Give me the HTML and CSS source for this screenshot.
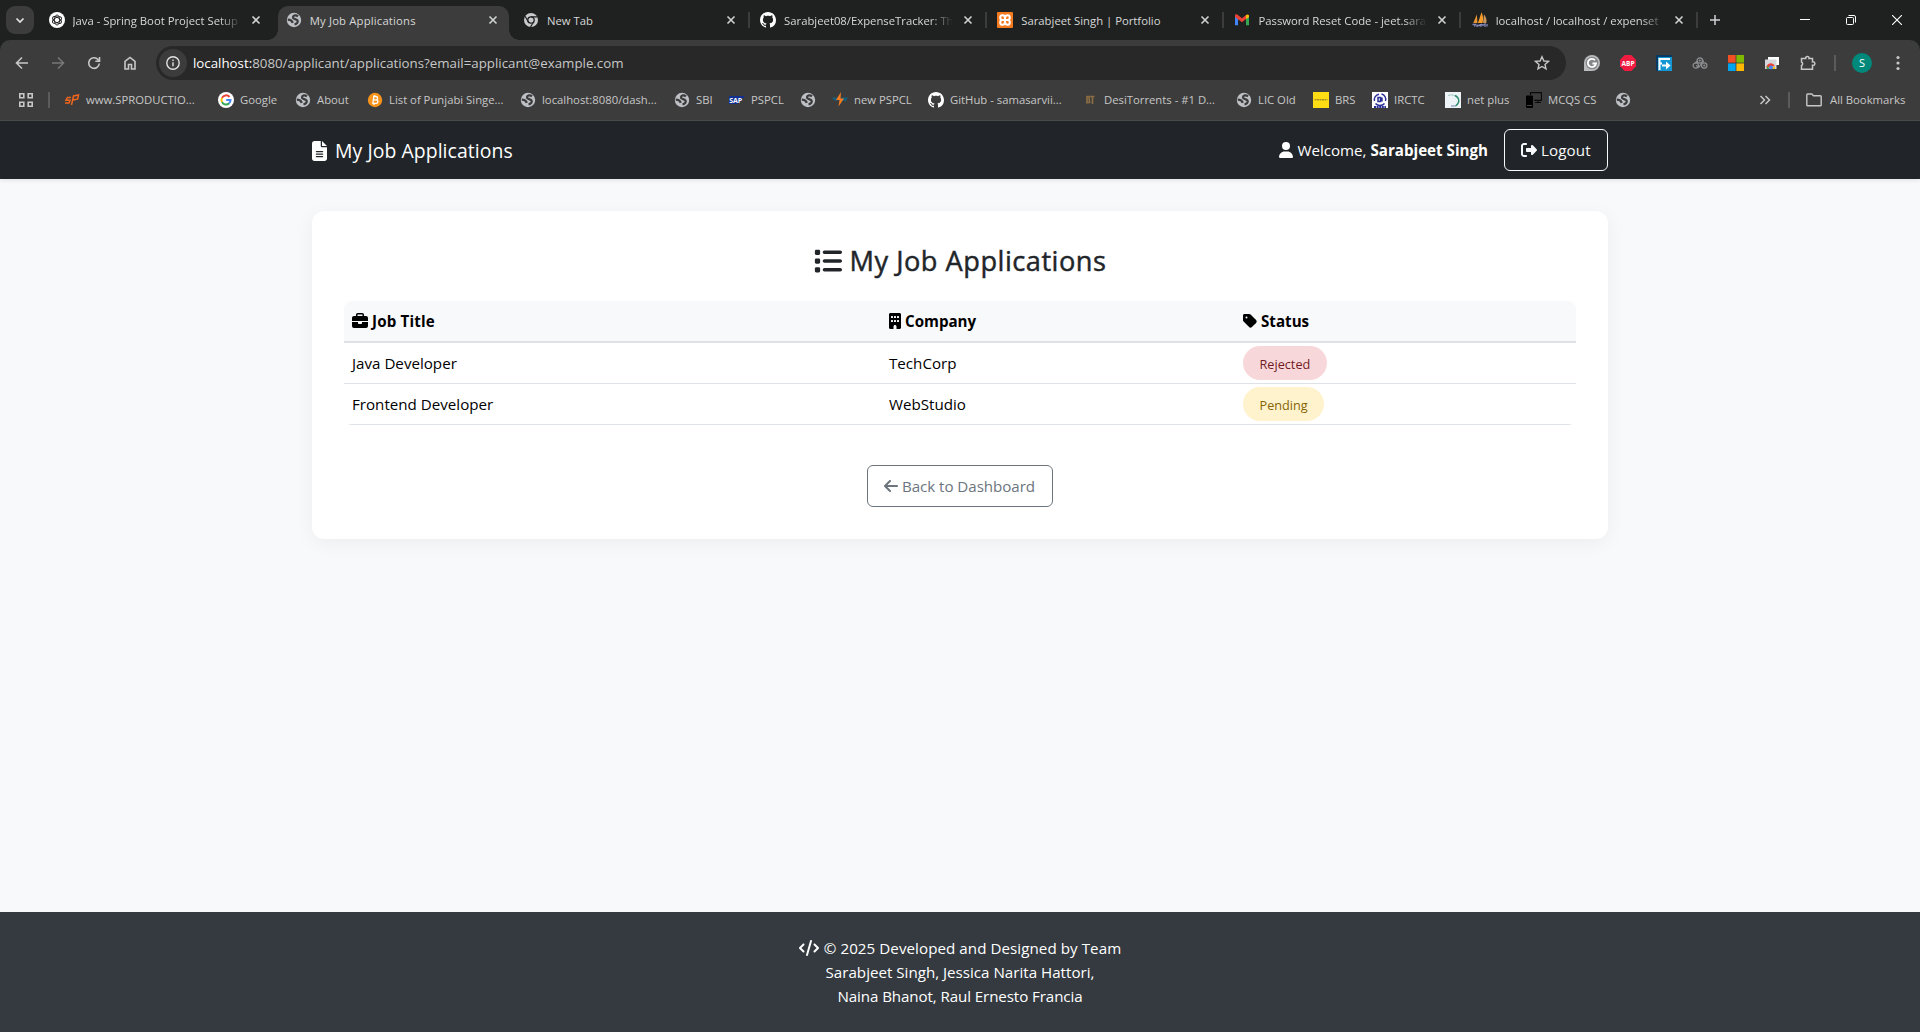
FILE: index.html
```html
<!DOCTYPE html>
<html lang="en">
<head>
<meta charset="utf-8">
<title>My Job Applications</title>
<link rel="stylesheet" href="styles.css">
</head>
<body>
<svg class="sprite" aria-hidden="true">
  <symbol id="globe" viewBox="0 0 16 16"><circle cx="8" cy="8" r="7.200" fill="#bdc1c6"/><g fill="none" stroke="#3c3c3c" stroke-width="2.200"><path d="M12 4.300C9.800 2.500 7.200 3.300 7 5.200c-.2 2.300 3 1.500 4.500 3.200 1 1.500-.5 3.300-3 4.100"/><path d="M1.800 7.600c2.200 0 4.200.8 5 3.200"/></g></symbol>
  <symbol id="github" viewBox="0 0 16 16"><path fill="#fff" d="M8 0C3.580 0 0 3.580 0 8c0 3.540 2.290 6.530 5.470 7.590.4.070.55-.17.55-.38 0-.19-.01-.82-.01-1.490-2.010.37-2.530-.49-2.690-.94-.09-.23-.48-.94-.82-1.130-.28-.15-.68-.52-.01-.53.63-.01 1.080.58 1.230.82.72 1.210 1.870.87 2.330.66.070-.52.28-.87.51-1.070-1.780-.2-3.640-.89-3.640-3.950 0-.87.31-1.590.82-2.150-.08-.2-.36-1.020.080-2.120 0 0 .67-.21 2.200.82.64-.18 1.320-.27 2-.27.68 0 1.360.090 2 .27 1.530-1.040 2.200-.82 2.200-.82.44 1.100.16 1.920.080 2.120.51.56.82 1.270.82 2.150 0 3.070-1.870 3.750-3.650 3.950.29.25.54.73.54 1.480 0 1.070-.01 1.930-.01 2.200 0 .21.15.46.55.38A8.013 8.013 0 0016 8c0-4.420-3.580-8-8-8z"/></symbol>
  <symbol id="close" viewBox="0 0 10 10"><path d="M1.500 1.500l7 7m0-7l-7 7" stroke="#d0d2d2" stroke-width="1.600" fill="none"/></symbol>
</svg>

<header class="browser">
  <div class="tabstrip">
    <button class="tab-search"><svg width="10" height="10" viewBox="0 0 10 10"><path d="M1.500 3.500L5 7l3.500-3.500" fill="none" stroke="#e3e3e3" stroke-width="1.700"/></svg></button>
    <div class="tab no-line"><svg class="fav" viewBox="0 0 16 16"><circle cx="8" cy="8" r="8" fill="#fff"/><g fill="none" stroke="#222" stroke-width=".9"><ellipse cx="8" cy="8" rx="2.500" ry="5"/><ellipse cx="8" cy="8" rx="2.500" ry="5" transform="rotate(60 8 8)"/><ellipse cx="8" cy="8" rx="2.500" ry="5" transform="rotate(120 8 8)"/></g></svg><span class="label fade">Java - Spring Boot Project Setup</span><svg class="x"><use href="#close"/></svg></div>
    <div class="tab active"><svg class="fav"><use href="#globe"/></svg><span class="label t-a">My Job Applications</span><svg class="x"><use href="#close"/></svg></div>
    <div class="tab"><svg class="fav" viewBox="0 0 16 16"><circle cx="8" cy="8" r="7" fill="#c8cacc"/><circle cx="8" cy="8" r="3.200" fill="none" stroke="#1f2120" stroke-width="1.300"/><path d="M8 4.800h6.300M5.300 9.700L2.100 4.200M10.700 9.700L7.500 15" stroke="#1f2120" stroke-width="1.200"/></svg><span class="label">New Tab</span><svg class="x"><use href="#close"/></svg></div>
    <div class="tab"><svg class="fav"><use href="#github"/></svg><span class="label fade">Sarabjeet08/ExpenseTracker: Th</span><svg class="x"><use href="#close"/></svg></div>
    <div class="tab"><svg class="fav" viewBox="0 0 16 16"><rect width="16" height="16" rx="1" fill="#f47a20"/><path d="M8 6.200C8 4 6.800 3.200 5.500 3.200S3.200 4 3.200 5.600 4 8 5.500 8h5c1.500 0 2.300-.8 2.300-2.400s-1-2.400-2.300-2.400S8 4 8 6.200v3.600c0 2.200-1.200 3-2.500 3S3.200 12 3.200 10.400 4 8 5.500 8h5c1.500 0 2.300.8 2.300 2.400s-1 2.400-2.300 2.400S8 12 8 9.800" fill="none" stroke="#fff" stroke-width="2"/></svg><span class="label">Sarabjeet Singh | Portfolio</span><svg class="x"><use href="#close"/></svg></div>
    <div class="tab"><svg class="fav" viewBox="0 0 16 16"><path d="M1 4v9.300h3V7z" fill="#4285f4"/><path d="M15 4v9.300h-3V7z" fill="#34a853"/><path d="M1 3.500C1 2.300 2.500 2 3.500 2.700L8 6.200l4-3.100v4L8 10.300 1 5z" fill="#ea4335"/><path d="M12 3.100c1.500-1.100 3-.6 3 .9v1l-3 2.300z" fill="#fbbc04"/></svg><span class="label fade">Password Reset Code - jeet.sara</span><svg class="x"><use href="#close"/></svg></div>
    <div class="tab"><svg class="fav" viewBox="0 0 16 16"><path d="M4.800 2.500L5.500 11H1.300z" fill="#e9962f"/><path d="M9.500.3c1.600 3 2 7 1 10.700H6z" fill="#f79c2a"/><path d="M12 2.500c2.200 2.500 3 5.500 2.300 8.500H11z" fill="#c8955a"/><path d="M.5 12.500h3l-1 2m2.500-2v2.500m0-1.500h3v-1.500m1 0v2.700m0-2.500l2 1 2-1.200v3m2-3v2.500" fill="none" stroke="#8288b8" stroke-width="1.300"/></svg><span class="label fade">localhost / localhost / expenset</span><svg class="x"><use href="#close"/></svg></div>
    <button class="new-tab"><svg width="12" height="12" viewBox="0 0 12 12"><path d="M6 1v10M1 6h10" stroke="#d0d2d2" stroke-width="1.500"/></svg></button>
    <div class="window-controls">
      <svg width="10" height="10" viewBox="0 0 10 10"><path d="M0 4.500h10" stroke="#fff"/></svg>
      <svg width="10" height="10" viewBox="0 0 10 10" fill="none" stroke="#fff"><rect x=".5" y="2.500" width="7" height="7" rx="1"/><path d="M2.500.5H8Q9.500.5 9.500 2v5.500"/></svg>
      <svg width="10" height="10" viewBox="0 0 10 10"><path d="M0 0l10 10M10 0L0 10" stroke="#fff" stroke-width="1.100"/></svg>
    </div>
  </div>

  <div class="toolbar">
    <div class="nav">
      <svg viewBox="0 0 16 16"><path d="M14 8H3M8 2.500L2.500 8 8 13.500"/></svg>
      <svg class="dim" viewBox="0 0 16 16"><path d="M2 8h11M8 2.500L13.500 8 8 13.500"/></svg>
      <svg viewBox="0 0 16 16"><path d="M13.300 8.500A5.300 5.300 0 1 1 12 4.500l1.400 1.500M13.500 2v4.200H9.300"/></svg>
      <svg viewBox="0 0 16 16"><path d="M3 6.500V14h3.500V9.500h3V14H13V6.500l-5-4z"/></svg>
    </div>
    <div class="omnibox">
      <span class="site-info"><svg width="16" height="16" viewBox="0 0 16 16" fill="none" stroke="#e3e3e3" stroke-width="1.400"><circle cx="8" cy="8" r="6.200"/><path d="M8 7.200v4M8 4.500v1.500"/></svg></span>
      <span class="url"><b>localhost:</b>8080/applicant/applications?email=applicant@example.com</span>
      <svg class="star" width="16" height="16" viewBox="0 0 16 16"><path d="M8 1.800l1.900 4.200 4.500.4-3.400 3 1 4.400L8 11.500l-4 2.300 1-4.400-3.400-3L6.100 6z" fill="none" stroke="#c7c7c7" stroke-width="1.400"/></svg>
    </div>
    <div class="extensions">
      <svg viewBox="0 0 16 16"><path d="M8 0a8 8 0 1 1 0 16H0V8a8 8 0 0 1 8-8z" fill="#b9bbbd"/><circle cx="8" cy="8" r="6.300" fill="#85888a"/><path d="M11 5.200A4.100 4.100 0 1 0 12 8.500H8.500" fill="none" stroke="#fff" stroke-width="1.800"/></svg>
      <svg viewBox="0 0 16 16"><path d="M4.700 0h6.600L16 4.700v6.600L11.300 16H4.700L0 11.300V4.700z" fill="#f01b41"/><text x="8" y="10.500" text-anchor="middle" class="abp">ABP</text></svg>
      <svg viewBox="0 0 16 16"><rect width="16" height="16" rx="1" fill="#063a63"/><rect x="2" y="2" width="14" height="14" fill="#1597d4"/><path d="M3.500 15V4H14M3.500 8.500H6" fill="none" stroke="#fff" stroke-width="2"/><path d="M6 9.500h4V6.500l4.500 4-4.500 4v-3H6z" fill="#fff"/></svg>
      <svg viewBox="0 0 16 16" fill="none" stroke="#8f9193" stroke-width="1.200"><circle cx="7.800" cy="5.500" r="2.700"/><circle cx="3.800" cy="10.500" r="2.700"/><circle cx="12.200" cy="10.500" r="2.700"/><circle cx="7.800" cy="5.500" r=".5"/><path d="M4 10.500l3 1.500 3-4M10.500 4.500l1.200 3M5.300 6L3.300 8"/><circle cx="12.300" cy="10.500" r=".5"/></svg>
      <svg viewBox="0 0 16 16"><path d="M0 0h7.600v7.600H0z" fill="#f25022"/><path d="M8.400 0H16v7.600H8.400z" fill="#7fba00"/><path d="M0 8.400h7.600V16H0z" fill="#00a4ef"/><path d="M8.400 8.400H16V16H8.400z" fill="#ffb900"/></svg>
      <svg viewBox="0 0 16 16"><path d="M4 2h11v8H4z" fill="#fff"/><path d="M1 4.500h11.500V14H1z" fill="#d5d7da"/><path d="M2.600 13.800a4.200 4.200 0 0 1 8.200-2.500H7z" fill="#ea4335"/><path d="M2.800 10.500L5.500 14H3z" fill="#34a853"/><path d="M10.800 11.300q.6 1.200.2 2.700H7z" fill="#fbbc04"/><circle cx="7" cy="12.500" r="1.900" fill="#4285f4"/></svg>
      <svg viewBox="0 0 16 16"><path d="M1.500 3.500h4.200a1.700 1.700 0 1 1 3.300 0h3.500v3.400a1.800 1.800 0 1 1 0 3.400v4H1.500v-3.800a1.900 1.900 0 0 0 0-3.500z" fill="none" stroke="#c7c7c7" stroke-width="1.500"/></svg>
    </div>
    <i class="divider"></i>
    <span class="avatar">S</span>
    <svg class="menu" width="4" height="16" viewBox="0 0 4 16" fill="#c7c7c7"><circle cx="2" cy="2.500" r="1.600"/><circle cx="2" cy="8" r="1.600"/><circle cx="2" cy="13.500" r="1.600"/></svg>
  </div>

  <div class="bookmarks">
    <svg class="apps" width="14" height="14" viewBox="0 0 14 14" fill="none" stroke="#c7c7c7" stroke-width="1.600"><path d="M.8.8h4v4h-4zM9.200.8h4v4h-4zM.8 9.200h4v4h-4zM9.200 9.200h4v4h-4z"/></svg>
    <i class="divider"></i>
    <a><svg viewBox="0 0 16 16" fill="none" stroke="#f0661c" stroke-width="1.500"><path d="M7 5.500H3.500L2 8.200h4L5 11H1M7.500 13L9.500 4l5-1-.8 4-5 1.200"/></svg><span>www.SPRODUCTIO...</span></a>
    <a><svg viewBox="0 0 16 16"><circle cx="8" cy="8" r="8" fill="#fff"/><g fill="none" stroke-width="2"><path d="M11.500 5A4.500 4.500 0 0 0 4 5.900" stroke="#ea4335"/><path d="M4 5.900a4.600 4.600 0 0 0 0 4.200" stroke="#fbbc05"/><path d="M4 10.100a4.500 4.500 0 0 0 7.100 1.200" stroke="#34a853"/><path d="M11.100 11.300A4.300 4.300 0 0 0 12.500 8H8.200" stroke="#4285f4"/></g></svg><span>Google</span></a>
    <a><svg><use href="#globe"/></svg><span>About</span></a>
    <a><svg viewBox="0 0 16 16"><circle cx="8" cy="8" r="7.200" fill="#f7931a"/><path d="M6.300 4.500h2.600a1.600 1.600 0 0 1 0 3.300H6.200h3a1.800 1.800 0 0 1-.3 3.600H5.400M6.800 4.500l-1 7M7.500 3v1.500M7 11.500V13" fill="none" stroke="#fff" stroke-width="1.300"/></svg><span>List of Punjabi Singe...</span></a>
    <a><svg><use href="#globe"/></svg><span>localhost:8080/dash...</span></a>
    <a><svg><use href="#globe"/></svg><span>SBI</span></a>
    <a><svg viewBox="0 0 16 16"><path d="M0 4h16l-7.500 8H0z" fill="#12308f"/><text x="6.700" y="10.500" text-anchor="middle" class="sap">SAP</text></svg><span>PSPCL</span></a>
    <a><svg><use href="#globe"/></svg></a>
    <a><svg viewBox="0 0 16 16"><path d="M0 5.500h6l-1 3H2zM9 5.500h7L14 9H9z" fill="#14607c"/><path d="M9 0L4 8h3.500L6.500 14.500 12 6.500H8.500z" fill="#f47a20"/></svg><span>new PSPCL</span></a>
    <a><svg><use href="#github"/></svg><span>GitHub - samasarvii...</span></a>
    <a><svg viewBox="0 0 16 16" fill="none" stroke="#8a6d42" stroke-width="1.700"><path d="M5 4v7.500M4.500 4.500H7l.5 6H5M8 4.500h4.500M10.500 4v8"/></svg><span>DesiTorrents - #1 D...</span></a>
    <a><svg><use href="#globe"/></svg><span>LIC Old</span></a>
    <a><svg viewBox="0 0 16 16"><path d="M0 0h16v16H0z" fill="#ffdd15"/><path d="M1.500 7.800h13" stroke="#7d7020" stroke-dasharray="2 .5"/></svg><span>BRS</span></a>
    <a><svg viewBox="0 0 16 16"><path d="M0 0h16v16H0z" fill="#fff"/><g fill="none" stroke="#2a2f95"><path d="M2.500 9A5.500 5.500 0 0 1 7 2.200M9.500 2A5.500 5.500 0 0 1 13.500 9M3.500 11.500a6 6 0 0 0 9 0" stroke-width="1.400"/><path d="M6 5.500h2.500v4H6zM10 5.500v4" stroke-width="1.500"/><path d="M2 15h12" stroke-width="2" stroke-dasharray="2 .6"/></g></svg><span>IRCTC</span></a>
    <a><svg viewBox="0 0 16 16"><path d="M0 0h16v16H0z" fill="#edf3f6"/><path d="M3 3.500a7 6 0 0 1 9 2" fill="none" stroke="#9fc7c2"/><path d="M10 3.500c5 2.500 5 7.500.5 10.500" fill="none" stroke="#2f8f6d" stroke-width="1.400"/><path d="M10.500 14H6" stroke="#7480b5"/></svg><span>net plus</span></a>
    <a><svg viewBox="0 0 16 16"><path d="M4.500 3V.7h11v7.600H8M12 8v2.500M9 10.500h6" fill="none" stroke="#0a0a0a" stroke-width="1.200"/><rect y="3.500" width="7" height="12.500" rx="1" fill="#000"/><path d="M1 13.500h5" stroke="#444"/></svg><span>MCQS CS</span></a>
    <a><svg><use href="#globe"/></svg></a>
    <svg class="more" width="12" height="12" viewBox="0 0 12 12"><path d="M1.500 2L5.500 6l-4 4M6.500 2l4 4-4 4" fill="none" stroke="#c7c7c7" stroke-width="1.500"/></svg>
    <i class="divider"></i>
    <a><svg class="folder" viewBox="0 0 16 14"><path d="M.8 1.800Q.8 1 1.600 1h4.200l1.700 1.800h6.900q.8 0 .8.800v8.400q0 .8-.8.8H1.600q-.8 0-.8-.8z" fill="none" stroke="#c7c7c7" stroke-width="1.400"/></svg><span>All Bookmarks</span></a>
  </div>
</header>

<nav class="navbar">
  <div class="container">
    <span class="brand"><svg width="15" height="20" viewBox="0 0 384 512"><path d="M64 0C28.700 0 0 28.700 0 64V448c0 35.300 28.700 64 64 64H320c35.300 0 64-28.700 64-64V160H256c-17.700 0-32-14.300-32-32V0H64zM256 0V128H384L256 0zM112 256H272c8.800 0 16 7.200 16 16s-7.200 16-16 16H112c-8.800 0-16-7.200-16-16s7.200-16 16-16zm0 64H272c8.800 0 16 7.200 16 16s-7.200 16-16 16H112c-8.800 0-16-7.200-16-16s7.200-16 16-16zm0 64H272c8.800 0 16 7.200 16 16s-7.200 16-16 16H112c-8.800 0-16-7.200-16-16s7.200-16 16-16z"/></svg>My Job Applications</span>
    <div class="account">
      <span class="welcome"><svg width="14" height="16" viewBox="0 0 448 512"><path d="M224 256A128 128 0 1 0 224 0a128 128 0 1 0 0 256zm-45.700 48C79.800 304 0 383.800 0 482.300C0 498.700 13.300 512 29.700 512H418.300c16.400 0 29.700-13.300 29.700-29.700C448 383.800 368.200 304 269.700 304H178.300z"/></svg>Welcome,&nbsp;<strong>Sarabjeet Singh</strong></span>
      <a class="btn btn-light"><svg width="16" height="16" viewBox="0 0 512 512"><path d="M377.900 105.900L500.700 228.700c7.200 7.200 11.300 17.100 11.300 27.300s-4.100 20.100-11.300 27.300L377.900 406.100c-6.400 6.400-15 9.900-24 9.900c-18.700 0-33.900-15.200-33.900-33.900l0-62.100-128 0c-17.700 0-32-14.300-32-32l0-64c0-17.700 14.300-32 32-32l128 0 0-62.100c0-18.700 15.200-33.900 33.900-33.900c9 0 17.600 3.600 24 9.900zM160 96L96 96c-17.700 0-32 14.300-32 32l0 256c0 17.700 14.300 32 32 32l64 0c17.700 0 32 14.300 32 32s-14.300 32-32 32l-64 0c-53 0-96-43-96-96L0 128C0 75 43 32 96 32l64 0c17.700 0 32 14.300 32 32s-14.300 32-32 32z"/></svg>Logout</a>
    </div>
  </div>
</nav>

<main>
  <section class="card">
    <h3><svg width="28" height="28" viewBox="0 0 512 512"><path d="M40 48C26.700 48 16 58.700 16 72v48c0 13.300 10.700 24 24 24H88c13.300 0 24-10.700 24-24V72c0-13.300-10.700-24-24-24zM192 64c-17.700 0-32 14.300-32 32s14.300 32 32 32H480c17.700 0 32-14.300 32-32s-14.300-32-32-32zm0 160c-17.700 0-32 14.300-32 32s14.300 32 32 32H480c17.700 0 32-14.300 32-32s-14.300-32-32-32zm0 160c-17.700 0-32 14.300-32 32s14.300 32 32 32H480c17.700 0 32-14.300 32-32s-14.300-32-32-32zM16 232v48c0 13.300 10.700 24 24 24H88c13.300 0 24-10.700 24-24V232c0-13.300-10.700-24-24-24H40c-13.300 0-24 10.700-24 24zM40 368c-13.300 0-24 10.700-24 24v48c0 13.300 10.700 24 24 24H88c13.300 0 24-10.700 24-24V392c0-13.300-10.700-24-24-24z"/></svg><span>My Job Applications</span></h3>
    <div class="table-wrap">
      <table>
        <colgroup><col class="c-title"><col class="c-company"><col></colgroup>
        <thead>
          <tr>
            <th class="th-title"><span><svg width="16" height="16" viewBox="0 0 512 512"><path d="M184 48H328c4.400 0 8 3.600 8 8V96H176V56c0-4.400 3.600-8 8-8zm-56 8V96H64C28.700 96 0 124.700 0 160v96H192 320 512V160c0-35.300-28.700-64-64-64H384V56c0-30.900-25.100-56-56-56H184c-30.900 0-56 25.100-56 56zM512 288H320v32c0 17.700-14.300 32-32 32H224c-17.700 0-32-14.300-32-32V288H0V416c0 35.300 28.700 64 64 64H448c35.300 0 64-28.700 64-64V288z"/></svg>Job Title</span></th>
            <th><span><svg width="12" height="16" viewBox="0 0 384 512"><path fill-rule="evenodd" d="M48 0C21.500 0 0 21.500 0 48V464c0 26.500 21.500 48 48 48h96V432c0-26.500 21.500-48 48-48s48 21.500 48 48v80h96c26.500 0 48-21.500 48-48V48c0-26.500-21.500-48-48-48zM80 96h32q16 0 16 16v32q0 16-16 16H80q-16 0-16-16V112q0-16 16-16zm96 0h32q16 0 16 16v32q0 16-16 16H176q-16 0-16-16V112q0-16 16-16zm96 0h32q16 0 16 16v32q0 16-16 16H272q-16 0-16-16V112q0-16 16-16zM80 224h32q16 0 16 16v32q0 16-16 16H80q-16 0-16-16V240q0-16 16-16zm96 0h32q16 0 16 16v32q0 16-16 16H176q-16 0-16-16V240q0-16 16-16zm96 0h32q16 0 16 16v32q0 16-16 16H272q-16 0-16-16V240q0-16 16-16z"/></svg>Company</span></th>
            <th><span><svg width="14" height="16" viewBox="0 0 448 512"><path d="M0 80V229.500c0 17 6.700 33.300 18.700 45.300l176 176c25 25 65.500 25 90.500 0L418.700 317.300c25-25 25-65.500 0-90.500l-176-176c-12-12-28.300-18.700-45.300-18.700H48C21.500 32 0 53.500 0 80zm112 32a32 32 0 1 1 0 64 32 32 0 1 1 0-64z"/></svg>Status</span></th>
          </tr>
        </thead>
        <tbody>
          <tr><td>Java Developer</td><td>TechCorp</td><td><span class="badge rejected">Rejected</span></td></tr>
          <tr><td>Frontend Developer</td><td>WebStudio</td><td><span class="badge pending">Pending</span></td></tr>
        </tbody>
      </table>
    </div>
    <div class="actions"><a class="btn btn-secondary"><svg width="14" height="16" viewBox="0 0 448 512"><path d="M9.400 233.400c-12.500 12.500-12.500 32.800 0 45.300l160 160c12.500 12.500 32.800 12.500 45.300 0s12.500-32.800 0-45.300L109.200 288 416 288c17.700 0 32-14.300 32-32s-14.300-32-32-32l-306.700 0L214.600 118.600c12.500-12.500 12.500-32.800 0-45.300s-32.800-12.500-45.300 0l-160 160z"/></svg>Back to Dashboard</a></div>
  </section>
</main>

<footer>
  <p class="f1"><svg width="20" height="16" viewBox="0 0 640 512"><path d="M392.800 1.200c-17-4.900-34.700 5-39.600 22l-128 448c-4.900 17 5 34.700 22 39.600s34.700-5 39.600-22l128-448c4.900-17-5-34.700-22-39.600zm80.600 120.100c-12.500 12.500-12.500 32.800 0 45.300L562.700 256l-89.400 89.400c-12.500 12.500-12.500 32.800 0 45.300s32.800 12.500 45.300 0l112-112c12.500-12.500 12.500-32.800 0-45.300l-112-112c-12.500-12.500-32.800-12.500-45.300 0zm-306.700 0c-12.500-12.500-32.800-12.500-45.300 0l-112 112c-12.500 12.500-12.500 32.800 0 45.300l112 112c12.500 12.500 32.800 12.500 45.300 0s12.500-32.800 0-45.300L77.300 256l89.400-89.400c12.500-12.500 12.500-32.800 0-45.300z"/></svg>© 2025 Developed and Designed by Team</p>
  <p>Sarabjeet Singh, Jessica Narita Hattori,</p>
  <p class="f3">Naina Bhanot, Raul Ernesto Francia</p>
</footer>
</body>
</html>
```
FILE: styles.css
```css
* { box-sizing: border-box; }

body {
  margin: 0;
  height: 1032px;
  display: flex;
  flex-direction: column;
  overflow: hidden;
  background: #f8f9fb;
  font: 15.150px/24px "Open Sans", "Noto Sans", sans-serif;
  color: #212529;
}

button { border: 0; padding: 0; background: none; }
svg { flex: none; display: block; }
.sprite { position: absolute; width: 0; height: 0; }

/* Browser window */
.browser {
  flex: none;
  height: 121px;
  background: #1f2120;
  border-bottom: 1px solid #4a4c4b;
  color: #d6d8d8;
  font-size: 11.300px;
}

.tabstrip { height: 40px; display: flex; align-items: flex-end; padding-left: 6px; }
.tab-search {
  width: 28px; height: 28px; margin: 0 4px 6px 0; border-radius: 9px;
  background: #3c3c3c; display: flex; align-items: center; justify-content: center;
}
.tab {
  position: relative;
  width: 237.200px; height: 34px; padding: 0 13px 6px 10.500px;
  display: flex; align-items: center; flex: none;
}
.tab:not(.no-line):not(.active)::after {
  content: ""; position: absolute; right: 0; top: 6px;
  width: 2px; height: 16px; background: #3c3c3c;
}
.tab .fav { width: 16px; height: 16px; }
.tab .label { flex: 1; margin: 1px 5px 0 8px; line-height: 20px; white-space: nowrap; overflow: hidden; }
.tab .label.t-a { letter-spacing: .17px; }
.tab .fade {
  -webkit-mask-image: linear-gradient(90deg, #000 146px, transparent 169px);
  mask-image: linear-gradient(90deg, #000 146px, transparent 169px);
}
.tab .x { width: 10px; height: 10px; margin: 0 1px 0 6px; }
.active::before {
  content: ""; position: absolute; z-index: 0; left: 3px; right: 3px; top: 0; bottom: 0;
  background: #3c3c3c; border-radius: 10px 10px 0 0;
}
.active::after {
  content: ""; position: absolute; left: -7px; right: -7px; bottom: 0; height: 10px;
  background:
    radial-gradient(circle at 0 0, transparent 9.500px, #3c3c3c 10px) left / 10px 10px no-repeat,
    radial-gradient(circle at 100% 0, transparent 9.500px, #3c3c3c 10px) right / 10px 10px no-repeat;
}
.active > * { position: relative; z-index: 1; }
.new-tab { width: 33px; height: 40px; display: flex; align-items: center; justify-content: center; }
.window-controls { margin-left: auto; height: 40px; display: flex; align-items: center; gap: 36px; padding-right: 18px; }

.toolbar {
  height: 46px; padding: 6px 0 6px 4px; background: #3c3c3c;
  border-radius: 10px 10px 0 0; display: flex; align-items: center;
}
.nav { display: flex; width: 144px; }
.nav svg { width: 16px; height: 16px; margin: 0 10px; fill: none; stroke: #c7c7c7; stroke-width: 1.600; }
.nav .dim { stroke: #777; }
.omnibox {
  height: 34px; width: 1410px; margin-left: 8px; padding: 0 16px 0 3px; border-radius: 17px;
  background: #282828; display: flex; align-items: center; flex: none;
}
.site-info { width: 28px; height: 28px; border-radius: 50%; background: #3c3c3c; display: flex; align-items: center; justify-content: center; }
.url { margin-left: 6px; font-size: 13.300px; color: #c7c7c7; white-space: nowrap; }
.url b { font-weight: 400; color: #fff; }
.star { margin-left: auto; }
.extensions { display: flex; margin-left: 8px; }
.extensions svg { width: 16px; height: 16px; margin: 0 10px; }
.abp { font: 700 6.500px "Open Sans", sans-serif; fill: #fff; }
.sap { font: 700 7px "Open Sans", sans-serif; fill: #fff; }
.divider { width: 2px; height: 16px; background: #5b5b5b; display: block; }
.toolbar .divider { margin: 0 16px 0 8px; }
.avatar {
  width: 20px; height: 20px; border-radius: 50%; background: #00897b; color: #fff;
  font-size: 11px; line-height: 20px; text-align: center;
}
.menu { margin-left: 24px; }

.bookmarks {
  height: 34px; padding: 0 0 6px 19px; background: #3c3c3c; color: #c7c7c7;
  display: grid; align-items: center;
  grid-template-columns: 29px 16px 154px 77px 72px 153px 154px 55px 71px 32px 96px 154px 154px 77px 59px 73px 81px 89px 144px 29px 18px 1fr;
}
.bookmarks a { display: flex; align-items: center; gap: 6px; white-space: nowrap; line-height: 16px; }
.bookmarks a svg { width: 16px; height: 16px; }
.bookmarks a .folder { height: 14px; margin-right: 2px; }

/* The table of columns above holds icon starts; bookmarks sit one after another */
.bookmarks { grid-auto-flow: column; }

/* Application page */
.navbar { flex: none; height: 58px; background: #212529; color: #fff; box-shadow: 0 2px 4px rgba(0, 0, 0, .08); }
.container { width: 1296px; height: 58px; margin: 0 auto; display: flex; justify-content: space-between; align-items: center; }
.navbar svg, h3 svg, th svg, .btn svg, footer svg { fill: currentColor; }
.brand { display: flex; align-items: center; gap: 8px; padding-top: 2px; font-size: 19.400px; letter-spacing: .07px; }
.account, .welcome { display: flex; align-items: center; }
.account { gap: 16px; }
.welcome svg { margin-right: 4px; }

.btn {
  display: flex; align-items: center; gap: 4px; height: 42px; padding: 0 16px;
  border: 1px solid; border-radius: 6px; white-space: nowrap;
}
.btn-light { width: 104px; color: #f8f9fa; letter-spacing: .1px; }
.btn-secondary { width: 186px; color: #6c757d; letter-spacing: -.05px; }

main { flex: 1; padding-top: 32px; }
.card {
  width: 1296px; height: 328px; margin: 0 auto; padding: 32px;
  background: #fff; border-radius: 12px; box-shadow: 0 4px 20px rgba(0, 0, 0, .05);
}
h3 {
  margin: 0 0 22px; height: 36px; display: flex; align-items: center; justify-content: center; gap: 8px;
  font-size: 27.200px; font-weight: 500; letter-spacing: .5px;
}
h3 span { -webkit-text-stroke: .45px currentColor; }
.table-wrap { border-radius: 8px; overflow: hidden; }
table { width: 100%; border-collapse: separate; border-spacing: 0; table-layout: fixed; color: #000; }
.c-title { width: 537px; }
.c-company { width: 354px; }
th, td { height: 41px; padding: 0 8px; text-align: left; border-bottom: 1px solid #dee2e6; }
th { height: 42px; background: #f8f9fb; border-bottom-width: 2px; }
th span { display: flex; align-items: center; gap: 4px; }
.th-title span { letter-spacing: .15px; }
.badge { display: block; width: max-content; height: 34px; padding: 2px 16.500px 0; border-radius: 17px; font-size: 12.700px; line-height: 32px; }
.rejected { background: #f8d7da; color: #721c24; }
.pending { background: #fff3cd; color: #856404; }
.actions { margin-top: 40px; display: flex; justify-content: center; }

footer { flex: none; height: 120px; padding: 24px 0; background: #343a40; color: #fff; text-align: center; }
footer p { margin: 0; }
footer .f1 { display: flex; align-items: center; justify-content: center; gap: 5px; letter-spacing: .06px; }
footer .f3 { letter-spacing: -.1px; }
```
